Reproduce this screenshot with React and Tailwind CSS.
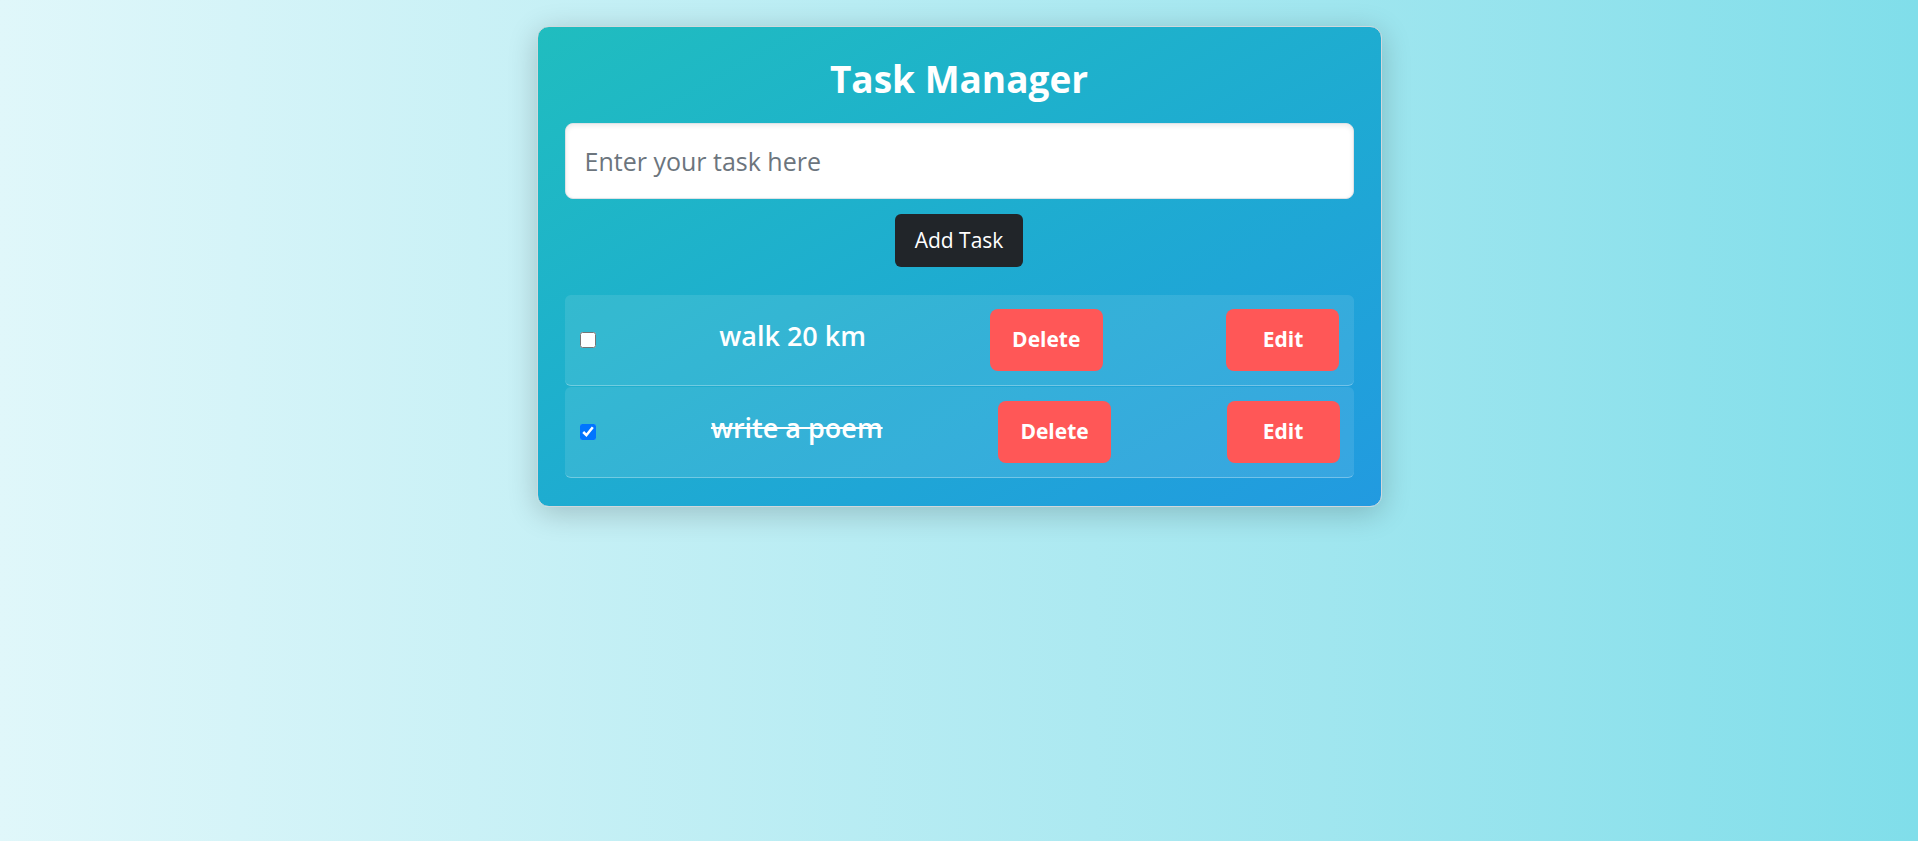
import React, { useState } from 'react';

export default function App() {
    const [tasks, setTasks] = useState([
        { id: 1, text: 'walk 20 km', done: false },
        { id: 2, text: 'write a poem', done: true },
    ]);
    const [input, setInput] = useState('');

    const addTask = () => {
        if (!input.trim()) return;
        setTasks((prev) => [...prev, { id: Date.now(), text: input.trim(), done: false }]);
        setInput('');
    };

    const toggleTask = (id) => {
        setTasks((prev) => prev.map((t) => (t.id === id ? { ...t, done: !t.done } : t)));
    };

    const deleteTask = (id) => {
        setTasks((prev) => prev.filter((t) => t.id !== id));
    };

    return (
        <div className="min-h-screen bg-linear-to-r from-[#e0f7fa] to-[#80deea] pt-[26px] font-['Open_Sans',sans-serif]">
            <div className="mx-auto w-[845px] rounded-xl border border-[#cfd8dc] bg-linear-to-br from-[#20bdbf] to-[#229ae0] p-[27px] shadow-[0_6px_30px_rgba(0,0,0,0.2)]">
                <h1 className="m-0 text-center text-[37px] font-bold leading-[49px] text-white">Task Manager</h1>

                <input
                    type="text"
                    value={input}
                    onChange={(e) => setInput(e.target.value)}
                    placeholder="Enter your task here"
                    className="mt-5 block h-[76px] w-full rounded-lg border border-[#dee2e6] bg-white px-[19px] text-[25px] text-[#212529] shadow-[inset_0_2px_5px_rgba(0,0,0,0.08)] outline-none placeholder:text-[#6c757d]"
                />

                <div className="mt-[15px] flex justify-center">
                    <button
                        onClick={addTask}
                        className="h-[53px] rounded-md bg-[#212529] px-5 text-[21px] text-white"
                    >
                        Add Task
                    </button>
                </div>

                <ul className="mt-7">
                    {tasks.map((task) => (
                        <li
                            key={task.id}
                            className="mb-px flex h-[91px] items-center justify-between rounded-md border-b border-white/30 bg-white/10 pl-[15px] pr-[14px]"
                        >
                            <input
                                type="checkbox"
                                className="h-4 w-4"
                                checked={task.done}
                                onChange={() => toggleTask(task.id)}
                            />
                            <span className={`mb-2 text-[27px] font-semibold text-white ${task.done ? 'line-through' : ''}`}>
                                {task.text}
                            </span>
                            <button
                                onClick={() => deleteTask(task.id)}
                                className="h-[62px] w-[113px] rounded-lg bg-[#ff5757] text-[21px] font-bold text-white"
                            >
                                Delete
                            </button>
                            <button className="h-[62px] w-[113px] rounded-lg bg-[#ff5757] text-[21px] font-bold text-white">
                                Edit
                            </button>
                        </li>
                    ))}
                </ul>
            </div>
        </div>
    );
}
